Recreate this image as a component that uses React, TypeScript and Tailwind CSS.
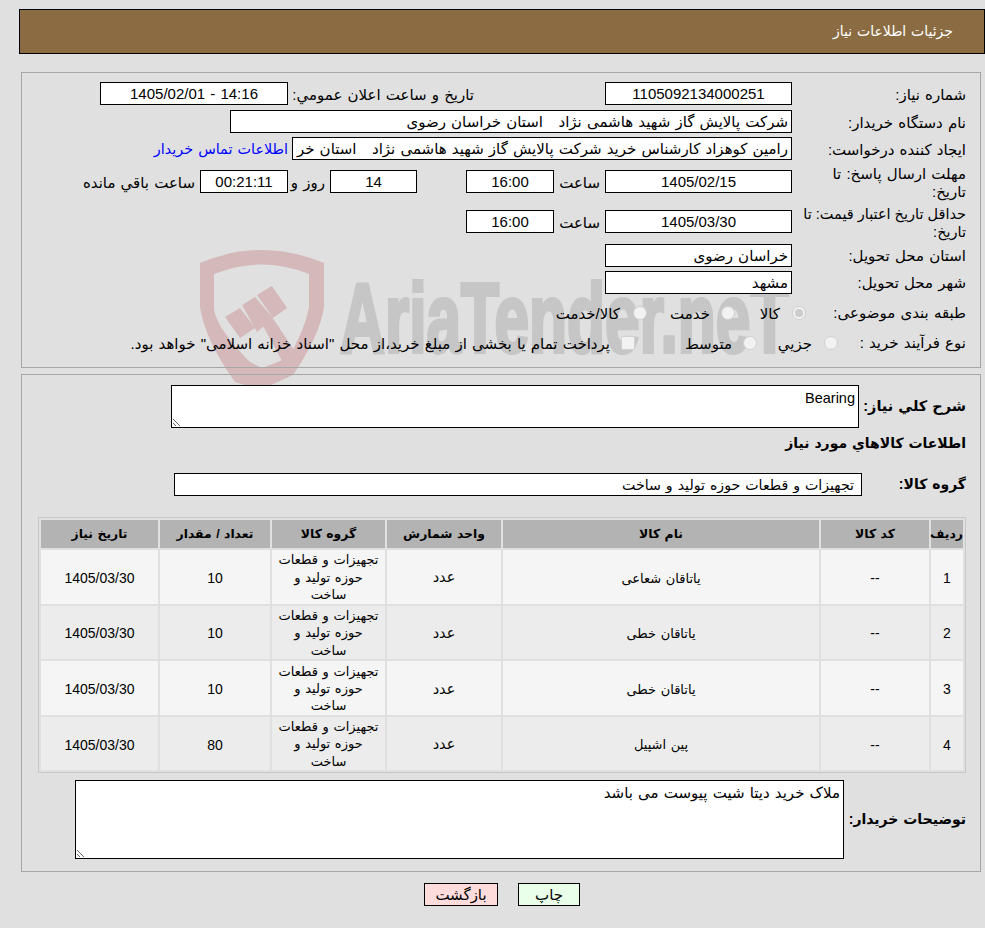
const box = 'h-[23px] border border-black bg-white px-[3px] text-[15px] text-black outline-none shrink-0 rounded-none [word-spacing:1px]'

function Field({ value, className = '' }: { value: string; className?: string }) {
  return <input readOnly value={value} dir="rtl" className={`${box} ${className}`} />
}

function Row({ label, h = 'h-[27px]', w = 'w-[174px]', children }: { label: string; h?: string; w?: string; children?: React.ReactNode }) {
  return (
    <div className={`flex items-center ${h}`}>
      <div className={`${w} shrink-0 leading-[18px]`}>{label}</div>
      {children}
    </div>
  )
}

function Radio({ checked = false }: { checked?: boolean }) {
  return (
    <span className="flex size-[14px] shrink-0 items-center justify-center rounded-full border border-[#d0d0d0] bg-[#f2f2f2]">
      {checked && <span className="size-[8px] rounded-full bg-[#cccccc]" />}
    </span>
  )
}

function Watermark() {
  return (
    <div dir="ltr" className="pointer-events-none absolute left-[200px] top-[250px] flex items-start">
      <svg width="126" height="140" viewBox="0 0 126 140" className="shrink-0">
        <path
          d="M0 13 Q62 -13 124 13 L124 57 Q120 85 93 125 L60 140 L35 132 Q5 90 0 57 Z M14 24 Q62 5 109 24 L109 57 Q105 80 88 108 L62 118 L50 112 Q18 80 14 60 Z"
          fill="#d5b8ba"
          fillRule="evenodd"
        />
        <path d="M25 67 L40 58 L55 78 L40 88 Z M42 55 L55 47 L73 68 L57 82 Z M57 45 L72 36 L87 58 L73 68 Z" fill="#d5b8ba" />
        <path d="M62 74 L72 67 L102 112 L88 122 Z" fill="#d5b8ba" />
      </svg>
      <span className="ml-[14px] mt-[8px] origin-left scale-x-[0.635] whitespace-nowrap font-['Liberation_Sans'] text-[98px] font-bold leading-[120px] text-[#c6c6c6] [-webkit-text-stroke:4px_#c6c6c6]">
        AriaTender.neT
      </span>
    </div>
  )
}

const rows = [
  { id: 1, name: 'یاتاقان شعاعی', qty: 10 },
  { id: 2, name: 'یاتاقان خطی', qty: 10 },
  { id: 3, name: 'یاتاقان خطی', qty: 10 },
  { id: 4, name: 'پین اشپیل', qty: 80 },
]

export default function App() {
  return (
    <div dir="rtl" className="relative h-[928px] overflow-hidden bg-[#e0e0e0] font-['Liberation_Sans','DejaVu_Sans',sans-serif] text-[15px] text-black [word-spacing:1px]">
      <Watermark />

      {/* Title bar */}
      <div className="relative ml-[19px] mt-[9px] flex h-[45px] items-center border border-black bg-[#8b6c42] pr-[31px] text-[14px] text-white">
        جزئیات اطلاعات نیاز
      </div>

      {/* Request details */}
      <div className="relative ml-[21px] mr-[4px] mt-[18px] h-[296px] border border-[#a6a6a6] pr-[14px] pt-[9px]">
        <div className="flex h-[28px] items-start">
          <div className="w-[174px] shrink-0 pt-[2px]">شماره نیاز:</div>
          <Field value="1105092134000251" className="w-[187px] text-center" />
          <div className="mr-[131px] w-[186px] shrink-0 whitespace-nowrap pt-[2px]">تاریخ و ساعت اعلان عمومي:</div>
          <Field value="14:16 - 1405/02/01" className="w-[188px] text-center" />
        </div>
        <div className="flex h-[27px] items-start">
          <div className="w-[174px] shrink-0 pt-[2px]">نام دستگاه خریدار:</div>
          <Field value="شرکت پالایش گاز شهید هاشمی نژاد   استان خراسان رضوی" className="w-[562px]" />
        </div>
        <div className="flex h-[33px] items-start">
          <div className="w-[174px] shrink-0 pt-[2px]">ایجاد کننده درخواست:</div>
          <Field value="رامین کوهزاد کارشناس خرید شرکت پالایش گاز شهید هاشمی نژاد   استان خراسان رضوی" className="w-[500px]" />
          <a className="mr-[4px] whitespace-nowrap pt-[2px] text-[14.4px] text-[#0000ff]">اطلاعات تماس خریدار</a>
        </div>
        <div className="flex h-[40px] items-start">
          <div className="mt-[-5px] w-[174px] shrink-0 pl-[20px] leading-[18px]">مهلت ارسال پاسخ: تا تاریخ:</div>
          <Field value="1405/02/15" className="w-[187px] text-center" />
          <div className="w-[51px] shrink-0 whitespace-nowrap pr-[5px] pt-[2px]">ساعت</div>
          <Field value="16:00" className="w-[88px] text-center" />
          <div className="w-[49px] shrink-0" />
          <Field value="14" className="w-[87px] text-center" />
          <div className="w-[42px] shrink-0 whitespace-nowrap pr-[5px] pt-[2px]">روز و</div>
          <Field value="00:21:11" className="w-[88px] bg-[#fffff0] text-center" />
          <div className="mr-[5px] whitespace-nowrap pt-[2px]">ساعت باقي مانده</div>
        </div>
        <div className="flex h-[32px] items-start">
          <div className="mt-[-5px] w-[174px] shrink-0 pl-[6px] text-[14.5px] leading-[18px] [word-spacing:0]">حداقل تاریخ اعتبار قیمت: تا تاریخ:</div>
          <Field value="1405/03/30" className="w-[187px] text-center" />
          <div className="w-[51px] shrink-0 whitespace-nowrap pr-[5px] pt-[2px]">ساعت</div>
          <Field value="16:00" className="w-[88px] text-center" />
        </div>
        <Row label="استان محل تحویل:">
          <Field value="خراسان رضوی" className="w-[187px]" />
        </Row>
        <Row label="شهر محل تحویل:">
          <Field value="مشهد" className="w-[187px]" />
        </Row>
        <Row label="طبقه بندی موضوعی:" h="h-[34px]" w="w-[160px]">
          <Radio checked />
          <span className="mr-[12px] w-[45px] shrink-0 pt-[3px]">کالا</span>
          <Radio />
          <span className="mr-[11px] w-[63px] shrink-0 pt-[3px]">خدمت</span>
          <Radio />
          <span className="mr-[13px] shrink-0 pt-[3px]">کالا/خدمت</span>
        </Row>
        <Row label="نوع فرآیند خرید :" h="h-[26px]" w="w-[128px]">
          <Radio />
          <span className="mr-[12px] w-[55px] shrink-0 pt-[3px]">جزيي</span>
          <Radio />
          <span className="mr-[11px] w-[97px] shrink-0 pt-[3px]">متوسط</span>
          <span className="size-[14px] shrink-0 rounded-[2px] border border-[#d0d0d0] bg-[#f2f2f2]" />
          <span className="mr-[11px] whitespace-nowrap pt-[3px]">پرداخت تمام یا بخشی از مبلغ خرید،از محل "اسناد خزانه اسلامی" خواهد بود.</span>
        </Row>
      </div>

      {/* Goods */}
      <div className="relative ml-[21px] mr-[4px] mt-[6px] h-[498px] border border-[#a6a6a6] pr-[14px] pt-[10px]">
        <div className="flex h-[43px] items-center">
          <div className="w-[107px] shrink-0 whitespace-nowrap text-[14.5px] font-bold">شرح کلي نیاز:</div>
          <textarea readOnly defaultValue="Bearing" dir="rtl" className="h-[43px] w-[688px] resize border border-black bg-white px-[3px] pt-[2px] text-[14.5px] outline-none" />
        </div>
        <div className="mt-[5px] flex h-[20px] items-center whitespace-nowrap text-[14px] font-bold">اطلاعات کالاهاي مورد نیاز</div>
        <div className="mt-[20px] flex h-[23px] items-center">
          <div className="w-[104px] shrink-0 whitespace-nowrap text-[14px] font-bold">گروه کالا:</div>
          <Field value="تجهیزات و قطعات حوزه تولید و ساخت" className="w-[688px] pr-[7px] !text-[14.2px]" />
        </div>
        <table className="mt-[21px] w-[928px] table-fixed border-separate border-spacing-[2px] border border-[#c8c8c8] text-center text-[14px]">
          <colgroup>
            <col className="w-[32px]" />
            <col className="w-[108px]" />
            <col className="w-[316px]" />
            <col className="w-[114px]" />
            <col className="w-[113px]" />
            <col className="w-[110px]" />
            <col />
          </colgroup>
          <thead>
            <tr className="h-[28px] bg-[#b3b3b3] text-[12.4px] font-bold">
              <th className="whitespace-nowrap">ردیف</th>
              <th>کد کالا</th>
              <th>نام کالا</th>
              <th>واحد شمارش</th>
              <th>گروه کالا</th>
              <th>تعداد / مقدار</th>
              <th>تاریخ نیاز</th>
            </tr>
          </thead>
          <tbody>
            {rows.map(r => (
              <tr key={r.id} className={`h-[53.6px] ${r.id % 2 ? 'bg-[#f5f5f5]' : 'bg-[#ececec]'}`}>
                <td className="pt-[3px]">{r.id}</td>
                <td className="pt-[3px]">--</td>
                <td className="pt-[3px] text-[13px]">{r.name}</td>
                <td className="pt-[3px] text-[14.5px]">عدد</td>
                <td className="whitespace-nowrap pt-[1px] text-[13px] leading-[17.3px]">
                  تجهیزات و قطعات
                  <br />
                  حوزه تولید و
                  <br />
                  ساخت
                </td>
                <td className="pt-[3px]">{r.qty}</td>
                <td className="pt-[3px]">1405/03/30</td>
              </tr>
            ))}
          </tbody>
        </table>
        <div className="mt-[7px] flex items-center">
          <div className="w-[122px] shrink-0 whitespace-nowrap text-[14px] font-bold">توضیحات خریدار:</div>
          <textarea readOnly defaultValue="ملاک خرید دیتا شیت پیوست می باشد" dir="rtl" className="h-[79px] w-[769px] resize border border-black bg-white px-[3px] pt-[1px] text-[15px] outline-none [word-spacing:1px]" />
        </div>
      </div>

      <div className="relative mt-[11px] flex justify-center gap-[20px] pl-[19px]">
        <button className="h-[23px] w-[62px] border border-black bg-[#eaffea]">چاپ</button>
        <button className="h-[23px] w-[74px] border border-black bg-[#ffdcdc]">بازگشت</button>
      </div>
    </div>
  )
}
